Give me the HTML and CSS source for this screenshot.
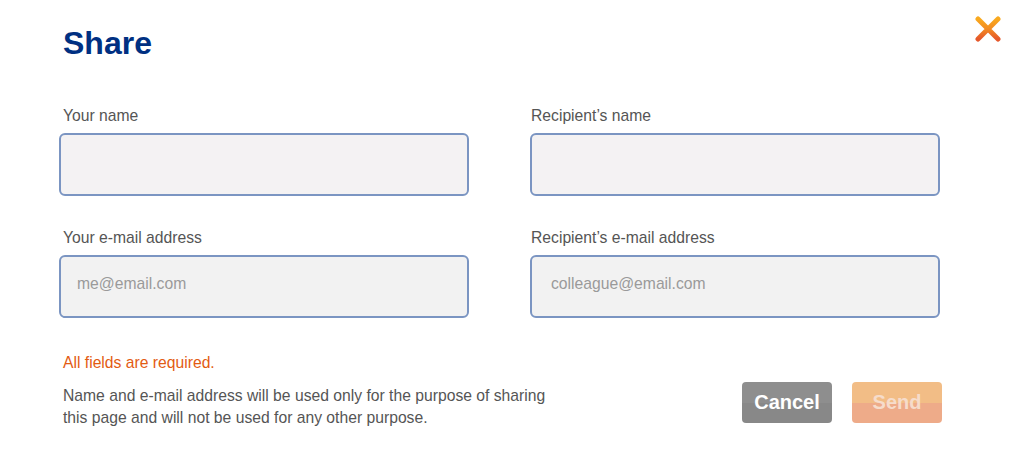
FILE: index.html
```html
<!DOCTYPE html>
<html lang="en">
<head>
<meta charset="utf-8">
<title>Share</title>
<link rel="stylesheet" href="styles.css">
</head>
<body>
<div class="dialog">
  <button class="close" aria-label="Close">
    <svg width="26" height="26" viewBox="0 0 26 26">
      <defs>
        <linearGradient id="xg" x1="0" y1="0" x2="0" y2="1">
          <stop offset="0" stop-color="#f9a91e"/>
          <stop offset="0.5" stop-color="#f28a22"/>
          <stop offset="1" stop-color="#e5572a"/>
        </linearGradient>
      </defs>
      <path d="M3 3 L23 23 M23 3 L3 23" stroke="url(#xg)" stroke-width="5" stroke-linecap="round" fill="none"/>
    </svg>
  </button>
  <h1 class="title">Share</h1>
  <form class="form">
    <div class="grid">
      <label class="field">
        <span class="label">Your name</span>
        <input class="input input-name" type="text">
      </label>
      <label class="field field-right">
        <span class="label">Recipient’s name</span>
        <input class="input input-name" type="text">
      </label>
      <label class="field">
        <span class="label">Your e-mail address</span>
        <input class="input" type="email" placeholder="me@email.com">
      </label>
      <label class="field field-right">
        <span class="label">Recipient’s e-mail address</span>
        <input class="input" type="email" placeholder="colleague@email.com">
      </label>
    </div>
    <p class="required">All fields are required.</p>
    <div class="footer">
      <p class="note">Name and e-mail address will be used only for the purpose of sharing<br>this page and will not be used for any other purpose.</p>
      <div class="actions">
        <button type="button" class="btn btn-cancel">Cancel</button>
        <button type="button" class="btn btn-send" disabled>Send</button>
      </div>
    </div>
  </form>
</div>
</body>
</html>
```

FILE: styles.css
```css
* { box-sizing: border-box; }
html, body {
  margin: 0;
  background: #ffffff;
  font-family: "Liberation Sans", Arial, sans-serif;
}
.dialog {
  position: relative;
  width: 1019px;
  height: 462px;
  padding: 25px 77px 0 59px;
}
.close {
  position: absolute;
  top: 16px;
  left: 975px;
  width: 26px;
  height: 26px;
  padding: 0;
  border: 0;
  background: none;
  cursor: pointer;
}
.close svg { display: block; }
.title {
  margin: 0 0 0 4px;
  font-size: 32px;
  line-height: 37px;
  font-weight: bold;
  color: #003082;
}
.form { margin-top: 45px; }
.grid {
  display: grid;
  grid-template-columns: 410px 410px;
  column-gap: 61px;
  row-gap: 33px;
}
.field {
  display: flex;
  flex-direction: column;
}
.label {
  margin-left: 4px;
  font-size: 15.7px;
  line-height: 18px;
  color: #555555;
  margin-bottom: 8px;
}
.field-right .label { margin-left: 1px; }
.input {
  width: 410px;
  height: 63px;
  border: 2px solid #7b95c2;
  border-radius: 6px;
  background: #f2f2f2;
  padding: 0 16px 5px 16px;
  font-family: "Liberation Sans", Arial, sans-serif;
  font-size: 15.7px;
  color: #333;
  outline: none;
}
.field-right .input { padding-left: 19px; }
.input-name { background: #f4f2f3; }
.input::placeholder { color: #9a9a9a; }
.required {
  margin: 36px 0 0 4px;
  font-size: 15.7px;
  line-height: 18px;
  color: #e35b12;
}
.footer {
  display: flex;
  justify-content: space-between;
  align-items: flex-start;
  margin-top: 10px;
}
.note {
  margin: 3px 0 0 4px;
  font-size: 15.7px;
  line-height: 22px;
  color: #555555;
}
.actions {
  display: flex;
  gap: 20px;
}
.btn {
  width: 90px;
  height: 41px;
  border: 0;
  border-radius: 4px;
  font-family: "Liberation Sans", Arial, sans-serif;
  font-size: 20px;
  font-weight: bold;
  padding: 0;
}
.btn-cancel {
  background: linear-gradient(#8e8e8e 0, #8e8e8e 50%, #888888 50%, #888888 100%);
  color: #ffffff;
  cursor: pointer;
}
.btn-send {
  background: linear-gradient(#f2bd86 0, #f2bd86 50%, #eeab89 50%, #eeab89 100%);
  color: #f6dccb;
}
```
